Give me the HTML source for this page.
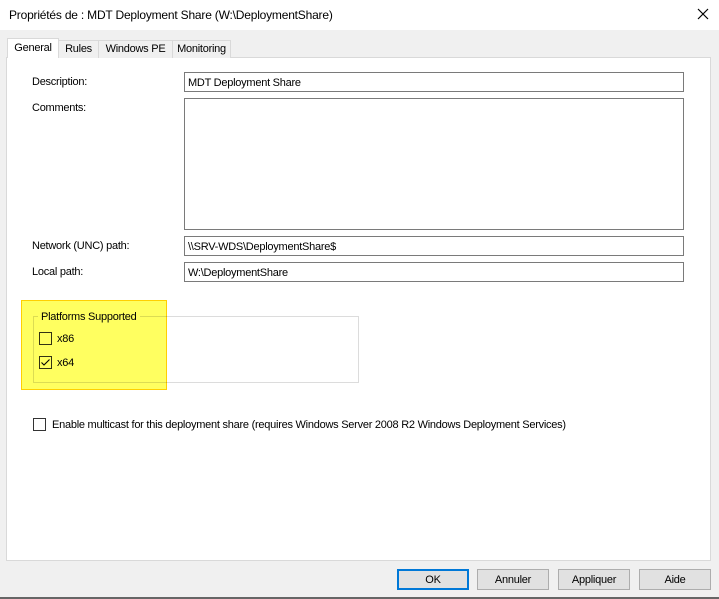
<!DOCTYPE html>
<html><head><style>
*{margin:0;padding:0;box-sizing:border-box}
body{width:719px;height:599px;background:#f0f0f0;font-family:"Liberation Sans",sans-serif;font-size:11px;letter-spacing:-0.25px;color:#000;position:relative;overflow:hidden}
.a{position:absolute;white-space:nowrap}
.t{margin-top:1px}
.title{left:0;top:0;width:719px;height:30px;background:#fff}
.in{position:absolute;background:#fff;border:1px solid #7a7a7a;padding:3px 3px 1px;line-height:14px}
.cb{position:absolute;width:13px;height:13px;border:1px solid #333;background:#fff}
.btn{position:absolute;top:569px;height:21px;width:72px;background:#e1e1e1;border:1px solid #adadad;text-align:center;line-height:20px}
.tab{position:absolute;top:40px;height:18px;background:#f0f0f0;border:1px solid #d9d9d9;border-bottom:none;text-align:center;line-height:17px}
</style></head><body>
<div class="a title"></div>
<div class="a" style="left:9px;top:8px;font-size:12px;letter-spacing:-0.2px">Propriétés de : MDT Deployment Share (W:\DeploymentShare)</div>
<svg class="a" style="left:697px;top:8px" width="12" height="12"><path d="M1 1L11 11M11 1L1 11" stroke="#000" stroke-width="1.2"/></svg>
<div class="a" style="left:6px;top:57px;width:705px;height:504px;background:#fff;border:1px solid #d9d9d9"></div>
<div class="tab" style="left:58px;width:41px">Rules</div>
<div class="tab" style="left:98px;width:75px">Windows PE</div>
<div class="tab" style="left:172px;width:59px">Monitoring</div>
<div class="tab" style="left:7px;top:38px;width:52px;height:20px;background:#fff;line-height:19px">General</div>
<div class="a" style="left:32px;top:76px">Description:</div>
<div class="in" style="left:184px;top:72px;width:500px;height:20px">MDT Deployment Share</div>
<div class="a" style="left:32px;top:102px">Comments:</div>
<div class="in" style="left:184px;top:98px;width:500px;height:132px"></div>
<div class="a" style="left:32px;top:240px">Network (UNC) path:</div>
<div class="in" style="left:184px;top:236px;width:500px;height:20px">\\SRV-WDS\DeploymentShare$</div>
<div class="a" style="left:32px;top:266px">Local path:</div>
<div class="in" style="left:184px;top:262px;width:500px;height:20px">W:\DeploymentShare</div>
<div class="a" style="left:33px;top:316px;width:326px;height:67px;border:1px solid #dcdcdc"></div>
<div class="a" style="left:38px;top:311px;padding:0 3px;background:#fff">Platforms Supported</div>
<div class="cb" style="left:39px;top:332px"></div>
<div class="a" style="left:57px;top:333px">x86</div>
<div class="cb" style="left:39px;top:356px"></div>
<svg class="a" style="left:39px;top:356px" width="13" height="13"><path d="M2.5 6.5L5 9L10.5 3.5" stroke="#000" fill="none" stroke-width="1.1"/></svg>
<div class="a" style="left:57px;top:357px">x64</div>
<div class="a" style="left:21px;top:300px;width:146px;height:90px;background:#ffff60;mix-blend-mode:multiply;border:1px solid #ffd000"></div>
<div class="cb" style="left:33px;top:418px"></div>
<div class="a" style="left:52px;top:419px">Enable multicast for this deployment share (requires Windows Server 2008 R2 Windows Deployment Services)</div>
<div class="btn" style="left:397px;border:2px solid #0078d7;line-height:18px">OK</div>
<div class="btn" style="left:477px">Annuler</div>
<div class="btn" style="left:558px">Appliquer</div>
<div class="btn" style="left:639px">Aide</div>
<div class="a" style="left:0;top:597px;width:719px;height:2px;background:#666"></div>
</body></html>
